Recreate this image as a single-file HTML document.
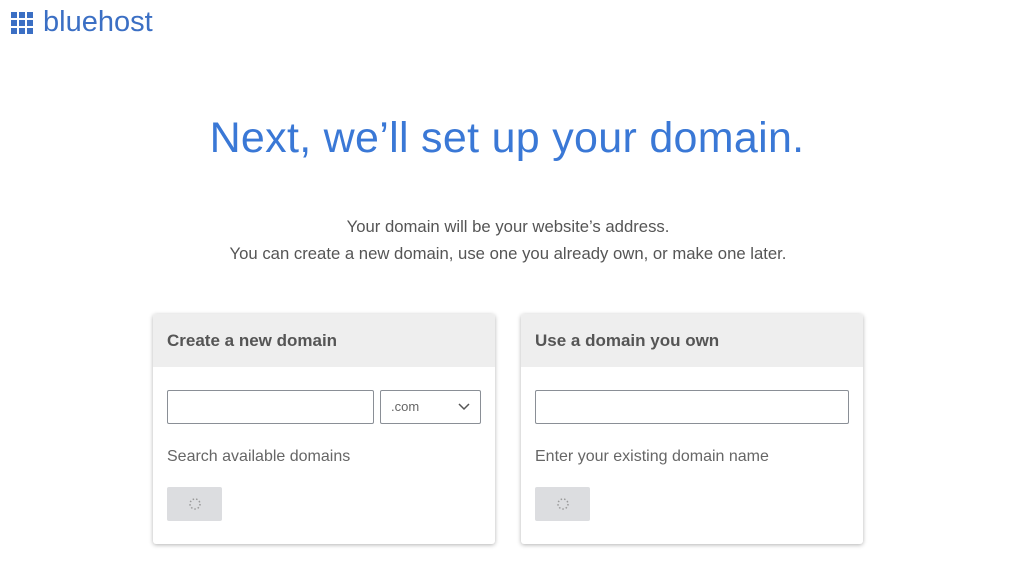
<!DOCTYPE html><html><head><style>
body{margin:0;width:1024px;height:562px;background:#fff;font-family:"Liberation Sans",sans-serif;position:relative;overflow:hidden}
.a{position:absolute}
.sq{position:absolute;width:6px;height:6px;background:#3b6fc4}
.card{position:absolute;top:314px;width:342px;height:230px;background:#fff;border-radius:3px;box-shadow:0 1px 4px rgba(0,0,0,.3)}
.hd{height:53px;background:#eeeeee;border-radius:3px 3px 0 0;color:#555;font-size:17px;font-weight:bold;line-height:53px;padding-left:14px}
.in{position:absolute;top:76px;height:34px;border:1px solid #8a8f96;border-radius:2px;box-sizing:border-box}
.lbl{position:absolute;top:134px;left:14px;font-size:16px;color:#666}
.btn{position:absolute;top:173px;left:14px;width:55px;height:34px;background:#dcdde0;border-radius:2px}
</style></head><body>
<div class="a" style="left:11px;top:12px;width:23px;height:23px">
<div class="sq" style="left:0;top:0"></div><div class="sq" style="left:8px;top:0"></div><div class="sq" style="left:16px;top:0"></div>
<div class="sq" style="left:0;top:8px"></div><div class="sq" style="left:8px;top:8px"></div><div class="sq" style="left:16px;top:8px"></div>
<div class="sq" style="left:0;top:16px"></div><div class="sq" style="left:8px;top:16px"></div><div class="sq" style="left:16px;top:16px"></div>
</div>
<div class="a" style="left:43px;top:6px;font-size:29px;color:#3b6fc4;letter-spacing:0">bluehost</div>
<div class="a" style="left:0;width:1014px;top:114px;text-align:center;font-size:43px;color:#3a78d6;letter-spacing:0.3px">Next, we’ll set up your domain.</div>
<div class="a" style="left:0;width:1016px;top:213px;text-align:center;font-size:16.7px;color:#555;line-height:27px">Your domain will be your website’s address.<br>You can create a new domain, use one you already own, or make one later.</div>
<div class="card" style="left:153px"><div class="hd">Create a new domain</div>
<div class="in" style="left:14px;width:207px"></div>
<div class="in" style="left:227px;width:101px;font-size:13px;color:#666;line-height:32px;padding-left:10px">.com<svg style="position:absolute;right:10px;top:12px" width="12" height="8"><path d="M1 1l5 5 5-5" stroke="#555" fill="none" stroke-width="1.5"/></svg></div>
<div class="lbl">Search available domains</div>
<div class="btn"><svg style="position:absolute;left:21px;top:10px" width="14" height="14"><circle cx="7" cy="7" r="5" stroke="#999" stroke-width="1.5" fill="none" stroke-dasharray="1.5 2"/></svg></div></div>
<div class="card" style="left:521px"><div class="hd">Use a domain you own</div>
<div class="in" style="left:14px;width:314px"></div>
<div class="lbl">Enter your existing domain name</div>
<div class="btn"><svg style="position:absolute;left:21px;top:10px" width="14" height="14"><circle cx="7" cy="7" r="5" stroke="#999" stroke-width="1.5" fill="none" stroke-dasharray="1.5 2"/></svg></div></div>
</body></html>
